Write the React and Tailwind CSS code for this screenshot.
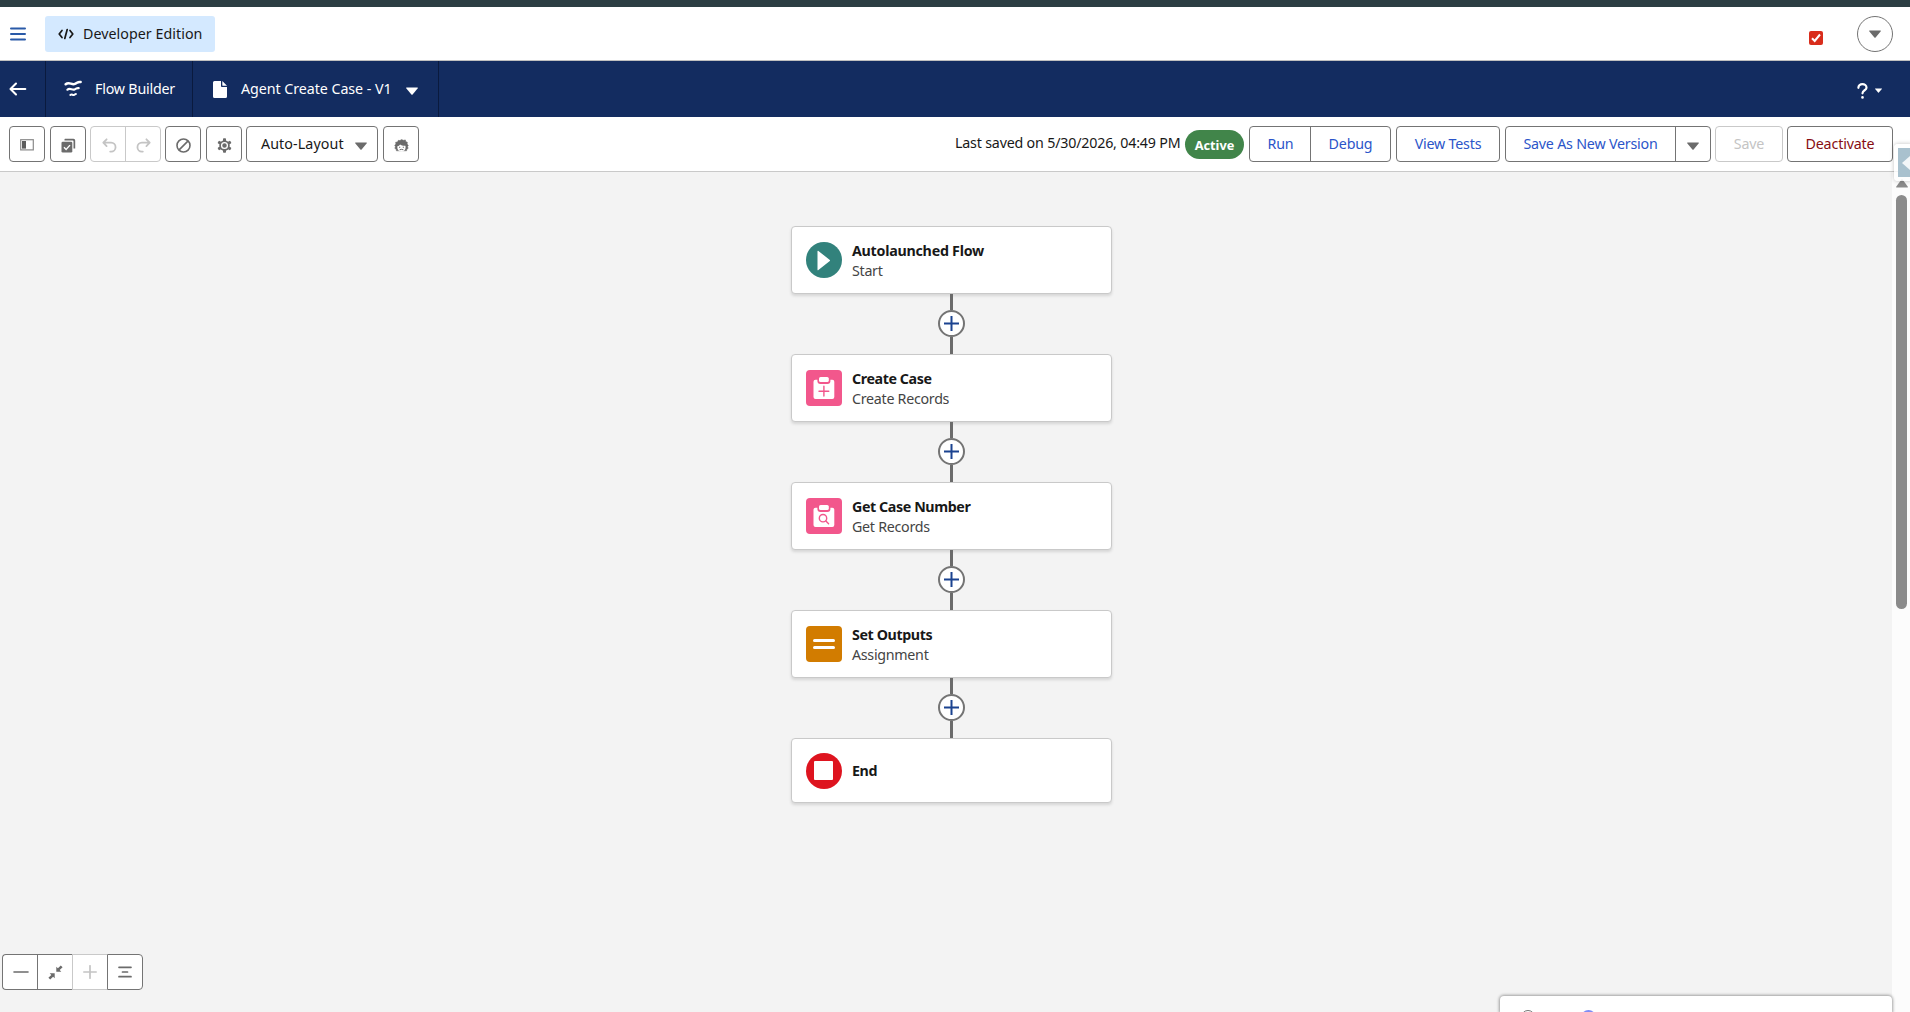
import React from "react";

const Caret = ({ className = "", w = 12, h = 8, fill = "#6b6b6b" }) => (
  <svg className={className} width={w} height={h} viewBox="0 0 12 8">
    <path d="M0.6 0.5h10.8a.5.5 0 0 1 .4.8L6.6 7.5a.8.8 0 0 1-1.2 0L.2 1.3A.5.5 0 0 1 .6.5z" fill={fill} />
  </svg>
);

const box = "flex shrink-0 items-center justify-center h-9 rounded border border-[#747474] bg-white";

function TopBar() {
  return (
    <div className="flex h-[54px] items-center border-b border-[#c0c0c0] bg-white pl-[10px]">
      <svg width="16" height="14" viewBox="0 0 16 14">
        <g stroke="#2a5aa8" strokeWidth="2" strokeLinecap="round">
          <path d="M1 1.6h14M1 7h14M1 12.4h14" />
        </g>
      </svg>
      <div className="ml-[19px] flex h-9 w-[170px] items-center rounded-[3px] bg-[#d4e9ff] pl-[13px]">
        <svg width="16" height="12" viewBox="0 0 16 12" fill="none" stroke="#181818" strokeWidth="1.7" strokeLinecap="round" strokeLinejoin="round">
          <path d="M4 2.4 1.2 6 4 9.600M12 2.4 14.800 6 12 9.600M9.2 1.500 6.8 10.500" />
        </svg>
        <span className="ml-[9px] text-[14.25px] tracking-[0.040px] text-[#181818]">Developer Edition</span>
      </div>
      <div className="ml-auto mt-[8px] flex h-[14px] w-[14px] items-center justify-center rounded-[2px] bg-[#d92d1c]">
        <svg width="10" height="10" viewBox="0 0 10 10" fill="none" stroke="#fff" strokeWidth="2">
          <path d="M1 5.2 3.7 8 9 1.5" />
        </svg>
      </div>
      <div className="ml-[34px] mr-[17px] flex h-9 w-9 items-center justify-center rounded-full border border-[#747474]">
        <Caret />
      </div>
    </div>
  );
}

function NavBar() {
  return (
    <div className="flex h-14 bg-[#132c60] text-[14.25px] text-white">
      <div className="flex w-[46px] items-center border-r border-[#0a1a3e] pl-[9px]">
        <svg width="18" height="14" viewBox="0 0 18 14" fill="none" stroke="#fff" strokeWidth="2.1" strokeLinecap="round" strokeLinejoin="round">
          <path d="M16.300 7H1.600M7 1.500 1.500 7 7 12.500" />
        </svg>
      </div>
      <div className="flex w-[147px] items-center border-r border-[#0a1a3e] pl-[18px]">
        <svg width="18" height="18" viewBox="0 0 18 18" fill="none" stroke="#fff" strokeLinecap="round">
          <path d="M1.700 4.300C5 1.400 7.500 5.200 11 3.900C13.500 3 13.500 1.500 16.600 2" strokeWidth="2.500" />
          <path d="M3.400 9.700C6 7.400 8 10.400 10.500 9.500C12.500 8.700 12.600 7.700 14.700 8.100" strokeWidth="2.200" />
          <path d="M6.300 15C8 13.700 8.700 15.600 10.200 14.900C11 14.500 11 14.100 11.900 14.100" strokeWidth="2" />
        </svg>
        <span className="ml-[13px] tracking-[-0.2px]">Flow Builder</span>
      </div>
      <div className="flex w-[246px] items-center border-r border-[#0a1a3e] pl-[20px]">
        <svg width="14" height="17" viewBox="0 0 14 17" fill="#fff">
          <path d="M1.500 0H8v4.800C8 5.600 8.400 6 9.200 6H14v9.500A1.500 1.500 0 0 1 12.500 17h-11A1.500 1.500 0 0 1 0 15.500v-14A1.500 1.500 0 0 1 1.500 0z" />
          <path d="M9.300 0 14 4.700H9.700a.4.4 0 0 1-.4-.4z" />
        </svg>
        <span className="ml-[14px] tracking-[-0.050px]">Agent Create Case - V1</span>
        <Caret className="ml-[14px] mt-1" fill="#fff" />
      </div>
      <div className="ml-auto mr-[28px] flex items-center">
        <svg width="11" height="16" viewBox="0 0 11 16" fill="none" stroke="#fff" strokeWidth="2.2" strokeLinecap="round" className="mt-[4px]">
          <path d="M1.400 4.800C1.400 2.600 3.200 1.200 5.400 1.200S9.500 2.700 9.500 4.700C9.500 7.300 5.500 7.300 5.500 10.300" />
          <path d="M5.500 14.200v.2" strokeWidth="2.600" />
        </svg>
        <Caret className="ml-[7px] mt-[3px]" w={7} h={5} fill="#fff" />
      </div>
    </div>
  );
}

const PanelIcon = () => (
  <svg width="14" height="12" viewBox="0 0 14 12" className="mt-px">
    <rect x="0.700" y="0.700" width="12.600" height="10.200" fill="none" stroke="#8a8a8a" strokeWidth="1.200" />
    <rect x="2" y="2" width="4" height="7.600" fill="#5c5c5c" />
  </svg>
);

const SelectIcon = () => (
  <svg width="15" height="15" viewBox="0 0 15 15" className="mt-[2px]">
    <path d="M4 .8h8.500A1.700 1.700 0 0 1 14.200 2.500V10.500h-1.700V3.200A.7.700 0 0 0 11.800 2.500H3.500v-1.200z" fill="#6b6b6b" />
    <rect x="0.500" y="3.800" width="10.800" height="10.800" rx="1.300" fill="#6b6b6b" />
    <path d="m3 9.300 2.100 2.100 3.900-4.300" fill="none" stroke="#fff" strokeWidth="1.400" />
  </svg>
);

const UndoIcon = ({ flip }) => (
  <svg width="15" height="15" viewBox="0 0 15 15" className={flip ? "-scale-x-100" : ""} fill="none" stroke="#c4c4c4" strokeWidth="1.800" strokeLinecap="round" strokeLinejoin="round">
    <path d="M4.600 1.300 1.300 4.700l3.300 3.400M1.800 4.700h7.300a4.400 4.400 0 0 1 0 8.900H8.200" />
  </svg>
);

const BanIcon = () => (
  <svg width="15" height="15" viewBox="0 0 15 15" fill="none" stroke="#6b6b6b" strokeWidth="1.600">
    <circle cx="7.500" cy="7.500" r="6.500" />
    <path d="m3.100 11.900 8.800-8.800" />
  </svg>
);

const GearIcon = () => (
  <svg width="15" height="15" viewBox="0 0 15 15">
    <g fill="#6b6b6b">
      <rect x="6" y="0.200" width="3" height="14.600" rx=".8" />
      <rect x="6" y="0.200" width="3" height="14.600" rx=".8" transform="rotate(60 7.500 7.500)" />
      <rect x="6" y="0.200" width="3" height="14.600" rx=".8" transform="rotate(120 7.500 7.500)" />
      <circle cx="7.500" cy="7.500" r="5.200" />
    </g>
    <circle cx="7.500" cy="7.500" r="2.900" fill="none" stroke="#fff" strokeWidth="1.300" />
  </svg>
);

const EinsteinIcon = () => (
  <svg width="15" height="13" viewBox="0 0 15 13">
    <path d="M4.300 1.300 6 1.600 7.500.4 9.300 1.300 11.400.9 11.700 2.600 13.400 3.300 13.100 5 14.300 6.400 13.500 7.700 14.200 9.300 12.800 10.300 12.600 11.800H2.400L2.200 10.300.8 9.300 1.500 7.700.7 6.400 1.900 5 1.600 3.300 3.500 2.900z" fill="#6b6b6b" stroke="#6b6b6b" strokeWidth=".5" strokeLinejoin="round" />
    <path d="M3.600 7C4.900 6.900 5.600 6.200 6.100 5.400C7.200 6.400 9.500 6.900 11.400 6.700C12 9.200 11.300 12.500 7.500 12.500S2.800 9.200 3.600 7z" fill="#fff" />
    <path d="M5.700 7.700v1.200M9.300 7.700v1.200M5.600 10.800q1.900-.9 3.800 0" fill="none" stroke="#6b6b6b" strokeWidth="1" />
  </svg>
);

function ToolBar() {
  return (
    <div className="flex h-[55px] items-start border-b border-[#c9c9c9] bg-white pl-[9px] pr-[17px] pt-[9px] text-[14.25px] tracking-[-0.2px]">
      <div className={`${box} w-9`}><PanelIcon /></div>
      <div className={`${box} ml-[5px] w-9`}><SelectIcon /></div>
      <div className="ml-1 flex h-9 w-[71px] rounded border border-[#c9c9c9]">
        <div className="flex w-[35px] items-center justify-center border-r border-[#c9c9c9] pl-[2px] pt-[3px]"><UndoIcon /></div>
        <div className="flex flex-1 items-center justify-center pt-[3px]"><UndoIcon flip /></div>
      </div>
      <div className={`${box} ml-1 w-9 pl-px pt-[3px]`}><BanIcon /></div>
      <div className={`${box} ml-[5px] w-9 pt-[2px]`}><GearIcon /></div>
      <div className="ml-1 flex h-9 w-[132px] items-center rounded border border-[#747474] pb-px pl-[14px] text-[#181818]">
        <span className="w-[94px] tracking-[0.1px]">Auto-Layout</span>
        <Caret className="mt-[5px]" />
      </div>
      <div className={`${box} ml-[5px] w-9 pt-[2px]`}><EinsteinIcon /></div>

      <span className="ml-auto w-[230px] whitespace-nowrap leading-[34px] tracking-[-0.190px] text-[#181818]">Last saved on 5/30/2026, 04:49 PM</span>
      <div className="mt-1 flex h-[29px] w-[59px] items-center justify-center rounded-full bg-[#41854a] pt-[2px] text-[12.750px] font-bold tracking-[0px] text-white">Active</div>
      <div className="ml-[5px] flex h-9 w-[142px] rounded border border-[#747474] leading-[33px] text-[#2b55c9]">
        <div className="w-[61px] border-r border-[#747474] pl-px text-center">Run</div>
        <div className="flex-1 text-center">Debug</div>
      </div>
      <div className={`${box} ml-[5px] w-[104px] pb-px text-[#2b55c9]`}>View Tests</div>
      <div className="ml-[5px] flex h-9 w-[206px] rounded border border-[#747474] leading-[33px] text-[#2b55c9]">
        <div className="w-[170px] whitespace-nowrap border-r border-[#747474] text-center">Save As New Version</div>
        <div className="flex flex-1 items-center justify-center pt-1"><Caret /></div>
      </div>
      <div className="ml-1 h-9 w-[68px] rounded border border-[#c9c9c9] text-center leading-[33px] text-[#c4c4c4]">Save</div>
      <div className={`${box} ml-1 w-[106px] pb-px tracking-[-0.150px] text-[#870d12]`}>Deactivate</div>
    </div>
  );
}

const Clipboard = ({ children }) => (
  <div className="flex h-9 w-9 items-center justify-center rounded bg-[#f2578c]">
    <svg width="22" height="24" viewBox="0 0 22 24">
      <path d="M2.500 3.700H4.400V5A3 3 0 0 0 7.400 8H14.400A3 3 0 0 0 17.400 5V3.700H19.300A2 2 0 0 1 21.300 5.700V21A2 2 0 0 1 19.300 23H2.500A2 2 0 0 1 .5 21V5.700A2 2 0 0 1 2.500 3.700z" fill="#fff" />
      <rect x="6" y="1" width="9.800" height="5" rx="1.600" fill="#fff" />
      <g fill="none" stroke="#f2578c" strokeWidth="1.400" strokeLinecap="round">{children}</g>
    </svg>
  </div>
);

const icons = {
  start: (
    <div className="flex h-9 w-9 items-center rounded-full bg-[#32827c] pl-[11px]">
      <svg width="14" height="21" viewBox="0 0 14 21"><path d="M.5 1.300v18.400c0 .6.5.8.9.4L12.800 11a.7.700 0 0 0 0-1L1.400.9C1 .5.500.7.500 1.300z" fill="#fff" /></svg>
    </div>
  ),
  create: <Clipboard><path d="M10.900 10.300v9.800M6 15.200h9.800" /></Clipboard>,
  get: <Clipboard><circle cx="10" cy="14.200" r="3.700" /><path d="m12.900 17.100 2.700 2.700" /></Clipboard>,
  assign: (
    <div className="flex h-9 w-9 flex-col items-center justify-center gap-[3.500px] rounded bg-[#d27c00]">
      <div className="h-[3px] w-[22px] rounded-full bg-white" />
      <div className="h-[3px] w-[22px] rounded-full bg-white" />
    </div>
  ),
  end: (
    <div className="flex h-9 w-9 items-center justify-center rounded-full bg-[#de141f]">
      <div className="h-[19px] w-[19px] rounded-[1px] bg-white" />
    </div>
  ),
};

const nodes = [
  { icon: "start", title: "Autolaunched Flow", sub: "Start" },
  { icon: "create", title: "Create Case", sub: "Create Records" },
  { icon: "get", title: "Get Case Number", sub: "Get Records" },
  { icon: "assign", title: "Set Outputs", sub: "Assignment" },
  { icon: "end", title: "End" },
];

const Connector = () => (
  <div className="flex h-[60px] flex-col items-center">
    <div className="h-4 w-[2.500px] bg-[#6b6b6b]" />
    <div className="flex h-[27px] w-[27px] items-center justify-center rounded-full border-2 border-[#747474] bg-white">
      <svg width="17" height="17" viewBox="0 0 17 17"><path d="M8.500 1v15M1 8.500h15" stroke="#1b4390" strokeWidth="2" /></svg>
    </div>
    <div className="w-[2.500px] flex-1 bg-[#6b6b6b]" />
  </div>
);

function Canvas() {
  return (
    <div className="relative flex-1 bg-[#f3f3f3]">
      <div className="ml-[791px] mt-[54px] w-[321px]">
        {nodes.map((n, i) => (
          <React.Fragment key={n.title}>
            {i > 0 && <Connector />}
            <div className={`flex items-center rounded border border-[#c9c9c9] bg-white pl-[13.500px] shadow-[0_2px_3px_rgba(0,0,0,0.12)] ${n.sub ? "h-[68px]" : "h-[65px]"}`}>
              {icons[n.icon]}
              <div className={`ml-[10.500px] text-[14.250px] leading-5 ${n.sub ? "pt-[2px]" : ""}`}>
                <div className={`font-bold text-[#181818] ${i === 0 ? "tracking-[-0.250px]" : "tracking-[-0.400px]"}`}>{n.title}</div>
                {n.sub && <div className="tracking-[-0.280px] text-[#444]">{n.sub}</div>}
              </div>
            </div>
          </React.Fragment>
        ))}
      </div>

      <div className="absolute bottom-[22px] left-[2px] flex h-9 w-[141px] rounded bg-white">
        <div className="flex w-[35px] items-center justify-center rounded-l border-y border-l border-[#747474] pl-px">
          <svg width="16" height="4" viewBox="0 0 16 4"><path d="M1 2h14" stroke="#6b6b6b" strokeWidth="1.600" strokeLinecap="round" /></svg>
        </div>
        <div className="flex w-[35px] items-center justify-center border-y border-l border-[#747474]">
          <svg width="15" height="15" viewBox="0 0 15 15" fill="#6b6b6b">
            <path d="M8.300 1.700v5h5l-1.600-1.600 2.900-2.900-1.800-1.800-2.900 2.900zM6.700 13.300v-5h-5l1.600 1.600-2.900 2.900 1.800 1.800 2.900-2.900z" />
          </svg>
        </div>
        <div className="flex w-[35px] items-center justify-center border-y border-l border-[#c9c9c9]">
          <svg width="14" height="14" viewBox="0 0 14 14"><path d="M7 .8v12.400M.8 7h12.400" stroke="#c4c4c4" strokeWidth="1.700" strokeLinecap="round" /></svg>
        </div>
        <div className="flex w-9 items-center justify-center rounded-r border border-[#747474]">
          <svg width="14" height="12" viewBox="0 0 14 12"><path d="M1 1.300h12M4.500 6h5M1 10.700h12" stroke="#6b6b6b" strokeWidth="1.700" strokeLinecap="round" /></svg>
        </div>
      </div>

      <div className="absolute bottom-0 right-0 top-0 flex w-[18px] flex-col items-center bg-[#fcfcfc] pt-[7px]">
        <svg width="12" height="9" viewBox="0 0 12 9" className="ml-px"><path d="M5.300.8a.9.900 0 0 1 1.400 0l5 6.700c.4.600.1 1.100-.6 1.100H.9C.2 8.600-.1 8.100.3 7.500z" fill="#8b8b8b" /></svg>
        <div className="mt-[7px] h-[414px] w-[11px] rounded-full bg-[#8b8b8b]" />
      </div>

      <div className="absolute bottom-0 right-[18px] flex h-4 w-[392px] items-start overflow-hidden rounded-t bg-white pl-[21px] pt-[14px] shadow-[0_0_3px_1px_rgba(0,0,0,0.35)]">
        <div className="h-[14px] w-[14px] shrink-0 rounded-full border border-[#747474]" />
        <div className="ml-[46px] h-[15px] w-[15px] shrink-0 rounded-full bg-[#7f8cf5]" />
      </div>
    </div>
  );
}

export default function App() {
  return (
    <div className="relative flex h-[1012px] w-[1910px] flex-col overflow-hidden bg-white font-['Noto_Sans','Open_Sans',sans-serif]">
      <div className="h-[7px] shrink-0 bg-[#2c3e43]" />
      <TopBar />
      <NavBar />
      <ToolBar />
      <Canvas />
      <div className="absolute right-[-4px] top-[144px] flex h-[37px] w-[20px] items-center rounded bg-white/80 pl-1 shadow-[0_0_4px_rgba(0,0,0,0.25)]">
        <div className="flex h-[29px] w-4 items-center bg-[#a9c1ce] pl-1">
          <svg width="8" height="14" viewBox="0 0 8 14"><path d="M0 7 8 0v14z" fill="#f3f6f8" /></svg>
        </div>
      </div>
    </div>
  );
}
